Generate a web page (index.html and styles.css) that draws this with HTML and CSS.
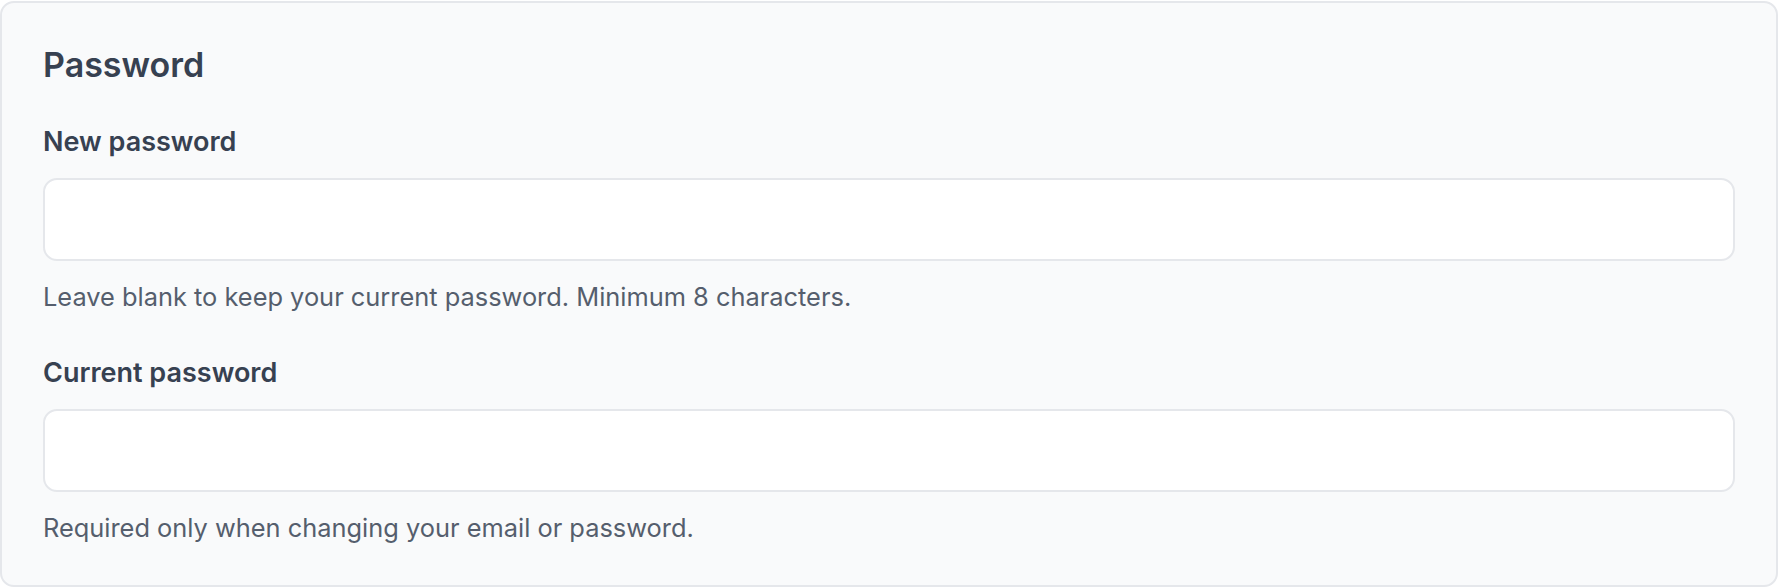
FILE: index.html
```html
<!doctype html>
<html lang="en">
<head>
    <title>Password</title>
    <link rel="stylesheet" href="styles.css">
</head>
<body>
    <form class="card">
        <h2 class="card-title">Password</h2>
        <div class="field">
            <label for="new-password">New password</label>
            <input type="password" id="new-password" name="new_password">
            <p class="hint">Leave blank to keep your current password. Minimum 8 characters.</p>
        </div>
        <div class="field">
            <label for="current-password">Current password</label>
            <input type="password" id="current-password" name="current_password">
            <p class="hint">Required only when changing your email or password.</p>
        </div>
    </form>
</body>
</html>
```

FILE: styles.css
```css
body {
    margin: 0;
    padding-top: 1px;
    font-family: Inter, "Liberation Sans", sans-serif;
}
.card {
    background: #f9fafb;
    border: 2px solid #e5e7eb;
    border-radius: 14px;
    padding: 40px 41px 40px;
    display: flex;
    flex-direction: column;
    gap: 41px;
}
.card-title {
    margin: 0 0 -4px;
    font-size: 34px;
    line-height: 44px;
    font-weight: 600;
    color: #374151;
}
.field {
    display: flex;
    flex-direction: column;
}
.field label {
    font-size: 27px;
    line-height: 36px;
    font-weight: 600;
    color: #374151;
    margin-bottom: 18px;
}
.field input {
    height: 83px;
    box-sizing: border-box;
    border: 2px solid #e5e7eb;
    border-radius: 14px;
    background: #fff;
}
.hint {
    margin: 19px 0 0;
    font-size: 25.4px;
    line-height: 34px;
    color: #555e6d;
}
```
